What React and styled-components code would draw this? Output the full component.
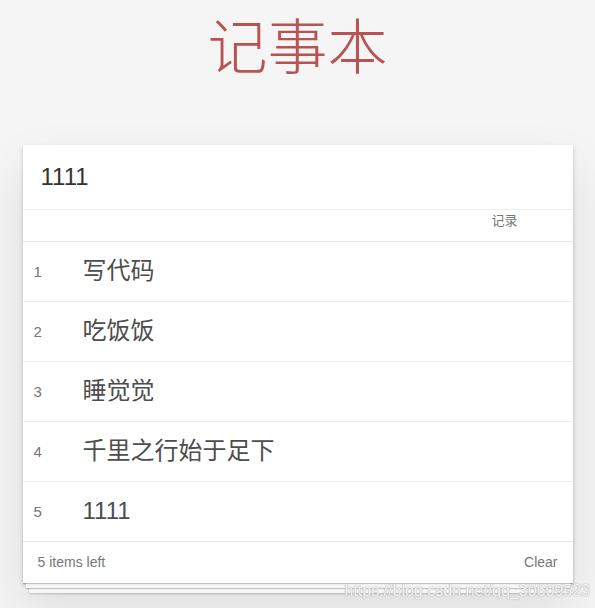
import React, { useState } from 'react';
import styled, { createGlobalStyle } from 'styled-components';

const GlobalStyle = createGlobalStyle`
  html, body {
    margin: 0;
    padding: 0;
  }
  html {
    background: #f5f5f5;
  }
  body {
    min-height: 608px;
    font-family: "Liberation Sans", Arial, "Noto Sans CJK SC", sans-serif;
    color: #4d4d4d;
    font-size: 14px;
  }
`;

const Page = styled.section`
  width: 550px;
  margin: 0 auto;
  padding-bottom: 30px;
  position: relative;
`;

const Header = styled.header`
  height: 145px;
  display: flex;
  justify-content: center;
`;

const Title = styled.h1`
  margin: 1px 0 0;
  font-size: 60px;
  line-height: 1.4;
  font-weight: 300;
  color: #b95252;
  font-family: "Noto Sans CJK SC", sans-serif;
`;

const Card = styled.div`
  position: relative;
  z-index: 1;
  background: #fff;
  box-shadow: 0 2px 4px rgba(0, 0, 0, 0.2), 0 25px 50px rgba(0, 0, 0, 0.1);
`;

const NewTodo = styled.input`
  display: block;
  width: 100%;
  box-sizing: border-box;
  border: none;
  outline: none;
  padding: 15px 18px;
  font-size: 24px;
  line-height: 1.4em;
  color: #333;
  font-family: "Liberation Sans", Arial, "Noto Sans CJK SC", sans-serif;
  border-bottom: 1px solid #f0f0f0;
`;

const ToggleRow = styled.div`
  height: 31px;
  display: flex;
  justify-content: flex-end;
  padding-right: 55px;
  border-bottom: 1px solid #e6e6e6;
`;

const ToggleLabel = styled.span`
  font-size: 13px;
  line-height: 20px;
  color: #777;
  font-family: "Noto Sans CJK SC", sans-serif;
`;

const List = styled.ul`
  margin: 0;
  padding: 0;
  list-style: none;
`;

const Item = styled.li`
  display: flex;
  align-items: center;
  height: 59px;
  border-bottom: 1px solid #ededed;
`;

const Index = styled.span`
  width: 60px;
  box-sizing: border-box;
  padding-left: 11px;
  font-size: 15px;
  color: #777;
`;

const Label = styled.label`
  font-size: 24px;
  line-height: 1.2;
  color: #4d4d4d;
  font-family: "Liberation Sans", Arial, "Noto Sans CJK SC", sans-serif;
`;

const Footer = styled.footer`
  position: relative;
  display: flex;
  justify-content: space-between;
  align-items: center;
  height: 20px;
  padding: 10px 15px 11px;
  color: #777;
  border-top: 1px solid #e6e6e6;
  margin-top: -1px;

  &::before {
    content: '';
    position: absolute;
    left: 0;
    right: 0;
    bottom: 0;
    height: 50px;
    overflow: hidden;
    box-shadow: 0 1px 1px rgba(0, 0, 0, 0.2),
      0 8px 0 -3px #f6f6f6,
      0 9px 1px -3px rgba(0, 0, 0, 0.2),
      0 16px 0 -6px #f6f6f6,
      0 17px 2px -6px rgba(0, 0, 0, 0.2);
    z-index: -1;
  }
`;

const Count = styled.span`
  font-size: 14px;
  line-height: 20px;
`;

const ClearButton = styled.button`
  border: none;
  background: none;
  padding: 0;
  font-size: 14px;
  line-height: 20px;
  color: #777;
  cursor: pointer;
  font-family: "Liberation Sans", Arial, sans-serif;
`;

const Watermark = styled.div`
  position: absolute;
  right: 5px;
  top: 582px;
  z-index: 2;
  font-size: 16px;
  color: rgba(255, 255, 255, 0.9);
  text-shadow: 0 0 1px #aaa, 0 0 1px #aaa;
  font-family: "Liberation Sans", Arial, sans-serif;
`;

export default function App() {
  const [todos] = useState(['写代码', '吃饭饭', '睡觉觉', '千里之行始于足下', '1111']);
  const [value, setValue] = useState('1111');

  return (
    <>
      <GlobalStyle />
      <Page>
        <Header>
          <Title>记事本</Title>
        </Header>
        <Card>
          <NewTodo value={value} onChange={(e) => setValue(e.target.value)} />
          <ToggleRow>
            <ToggleLabel>记录</ToggleLabel>
          </ToggleRow>
          <List>
            {todos.map((t, i) => (
              <Item key={i}>
                <Index>{i + 1}</Index>
                <Label>{t}</Label>
              </Item>
            ))}
          </List>
          <Footer>
            <Count>{todos.length} items left</Count>
            <ClearButton>Clear</ClearButton>
          </Footer>
        </Card>
      </Page>
      <Watermark>https://blog.csdn.net/qq_30609523</Watermark>
    </>
  );
}
